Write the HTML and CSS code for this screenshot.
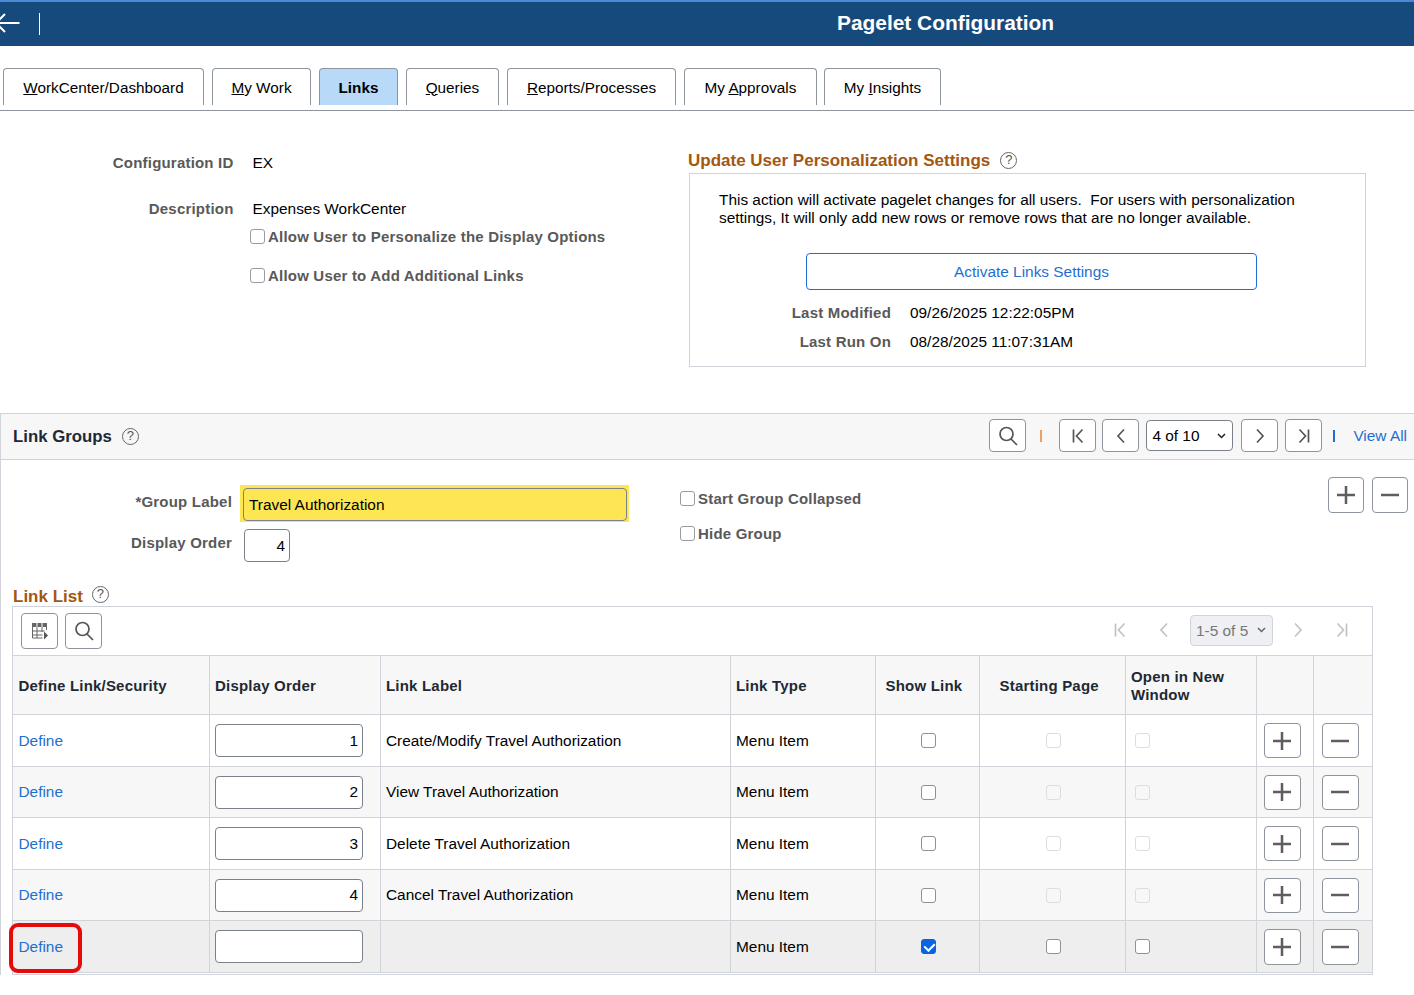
FILE: index.html
```html
<!DOCTYPE html>
<html lang="en">
<head>
<meta charset="utf-8">
<title>Pagelet Configuration</title>
<link rel="stylesheet" href="styles.css">
</head>
<body>
<svg class="defs" width="0" height="0" aria-hidden="true">
  <symbol id="i-search" viewBox="0 0 24 24"><circle cx="10.500" cy="10" r="6.500"/><path d="M15 15l6 6"/></symbol>
  <symbol id="i-first" viewBox="0 0 24 24"><path d="M7.500 5.500v13M16.500 5.500l-6 6.500 6 6.500"/></symbol>
  <symbol id="i-prev" viewBox="0 0 24 24"><path d="M15 5.500l-6 6.500 6 6.500"/></symbol>
  <symbol id="i-next" viewBox="0 0 24 24"><path d="M9 5.500l6 6.500-6 6.500"/></symbol>
  <symbol id="i-last" viewBox="0 0 24 24"><path d="M16.500 5.500v13M7.500 5.500l6 6.500-6 6.500"/></symbol>
  <symbol id="i-plus" viewBox="0 0 24 24"><path d="M12 3v18M3 12h18"/></symbol>
  <symbol id="i-minus" viewBox="0 0 24 24"><path d="M3 12h18"/></symbol>
</svg>

<header class="banner">
  <svg class="back" width="20" height="24" viewBox="0 0 20 24"><path d="M-5 11H19.500M5 2l-9 9 9 9"/></svg>
  <span class="banner-sep"></span>
  <h1 class="banner-title">Pagelet Configuration</h1>
</header>

<nav class="tabs">
  <a class="tab t1"><span><u>W</u>orkCenter/Dashboard</span></a>
  <a class="tab t2"><span><u>M</u>y Work</span></a>
  <a class="tab t3 active"><span>Links</span></a>
  <a class="tab t4"><span><u>Q</u>ueries</span></a>
  <a class="tab t5"><span><u>R</u>eports/Processes</span></a>
  <a class="tab t6"><span>My <u>A</u>pprovals</span></a>
  <a class="tab t7"><span>My <u>I</u>nsights</span></a>
</nav>

<section class="top">
  <div class="top-left">
    <div class="kv"><span class="lbl kv-l">Configuration ID</span><span class="val">EX</span></div>
    <div class="kv kv-desc"><span class="lbl kv-l">Description</span><span class="val">Expenses WorkCenter</span></div>
    <label class="opt opt-a"><input type="checkbox" class="cb"><span class="lbl">Allow User to Personalize the Display Options</span></label>
    <label class="opt opt-b"><input type="checkbox" class="cb"><span class="lbl">Allow User to Add Additional Links</span></label>
  </div>
  <div class="top-right">
    <h2 class="heading">Update User Personalization Settings <span class="help">?</span></h2>
    <div class="panel">
      <p class="panel-text">This action will activate pagelet changes for all users.&nbsp; For users with personalization settings, It will only add new rows or remove rows that are no longer available.</p>
      <button class="activate" type="button">Activate Links Settings</button>
      <div class="meta">
        <span class="lbl meta-l">Last Modified</span><span class="val">09/26/2025 12:22:05PM</span>
        <span class="lbl meta-l">Last Run On</span><span class="val">08/28/2025 11:07:31AM</span>
      </div>
    </div>
  </div>
</section>

<section class="groups">
  <div class="groups-head">
    <h2 class="groups-title">Link Groups <span class="help">?</span></h2>
    <div class="pager">
      <button class="ib tall" type="button"><svg class="ic"><use href="#i-search"/></svg></button>
      <span class="pipe orange"></span>
      <button class="ib tall" type="button"><svg class="ic"><use href="#i-first"/></svg></button>
      <button class="ib tall" type="button"><svg class="ic"><use href="#i-prev"/></svg></button>
      <select class="sel"><option>4 of 10</option></select>
      <button class="ib tall wide-gap" type="button"><svg class="ic"><use href="#i-next"/></svg></button>
      <button class="ib tall" type="button"><svg class="ic"><use href="#i-last"/></svg></button>
      <span class="pipe blue"></span>
      <a class="link viewall">View All</a>
    </div>
  </div>

  <div class="form">
    <div class="form-fields">
      <div class="f-row">
        <span class="lbl f-label">*Group Label</span>
        <span class="hl"><input class="inp inp-yellow" type="text" value="Travel Authorization"></span>
      </div>
      <div class="f-row f-row2">
        <span class="lbl f-label f-label2">Display Order</span>
        <input class="inp inp-short" type="text" value="4">
      </div>
    </div>
    <div class="form-checks">
      <label class="opt opt-c"><input type="checkbox" class="cb"><span class="lbl">Start Group Collapsed</span></label>
      <label class="opt opt-d"><input type="checkbox" class="cb"><span class="lbl">Hide Group</span></label>
    </div>
    <div class="form-actions">
      <button class="ib sq" type="button"><svg class="ic big"><use href="#i-plus"/></svg></button>
      <button class="ib sq" type="button"><svg class="ic big"><use href="#i-minus"/></svg></button>
    </div>
  </div>

  <h2 class="heading list-heading">Link List <span class="help">?</span></h2>
  <div class="list">
    <div class="list-bar">
      <button class="ib sq" type="button">
        <svg class="grid-ic" width="20" height="20" viewBox="0 0 20 20"><path class="g-top" d="M2 2h15v4H2z"/><path class="g-sep" d="M7 2v4M12 2v4"/><path class="g-lines" d="M2.500 6v11h10M16.500 6v3M2.500 10h12M2.500 14h10M7 6v11M12 6v5"/><path class="g-arrow" d="M14 10.500l4 4-4 4z"/></svg>
      </button>
      <button class="ib sq" type="button"><svg class="ic"><use href="#i-search"/></svg></button>
      <div class="list-pager">
        <svg class="ic off"><use href="#i-first"/></svg>
        <svg class="ic off"><use href="#i-prev"/></svg>
        <select class="sel sel-off" disabled><option>1-5 of 5</option></select>
        <svg class="ic off"><use href="#i-next"/></svg>
        <svg class="ic off"><use href="#i-last"/></svg>
      </div>
    </div>
    <table class="tbl">
      <colgroup><col class="c1"><col class="c2"><col class="c3"><col class="c4"><col class="c5"><col class="c6"><col class="c7"><col class="c8"><col class="c9"></colgroup>
      <thead>
        <tr><th>Define Link/Security</th><th>Display Order</th><th>Link Label</th><th>Link Type</th><th class="th-show">Show Link</th><th class="th-start">Starting Page</th><th>Open in New Window</th><th></th><th></th></tr>
      </thead>
      <tbody>
        <tr>
          <td><a class="link">Define</a></td>
          <td><input class="inp inp-row" type="text" value="1"></td>
          <td>Create/Modify Travel Authorization</td>
          <td>Menu Item</td>
          <td class="ck ck-show"><input type="checkbox" class="cb"></td>
          <td class="ck ck-start"><input type="checkbox" class="cb" disabled></td>
          <td class="ck-new"><input type="checkbox" class="cb" disabled></td>
          <td class="act"><button class="ib sq row-btn" type="button"><svg class="ic big"><use href="#i-plus"/></svg></button></td>
          <td class="act"><button class="ib sq row-btn" type="button"><svg class="ic big"><use href="#i-minus"/></svg></button></td>
        </tr>
        <tr>
          <td><a class="link">Define</a></td>
          <td><input class="inp inp-row" type="text" value="2"></td>
          <td>View Travel Authorization</td>
          <td>Menu Item</td>
          <td class="ck ck-show"><input type="checkbox" class="cb"></td>
          <td class="ck ck-start"><input type="checkbox" class="cb" disabled></td>
          <td class="ck-new"><input type="checkbox" class="cb" disabled></td>
          <td class="act"><button class="ib sq row-btn" type="button"><svg class="ic big"><use href="#i-plus"/></svg></button></td>
          <td class="act"><button class="ib sq row-btn" type="button"><svg class="ic big"><use href="#i-minus"/></svg></button></td>
        </tr>
        <tr>
          <td><a class="link">Define</a></td>
          <td><input class="inp inp-row" type="text" value="3"></td>
          <td>Delete Travel Authorization</td>
          <td>Menu Item</td>
          <td class="ck ck-show"><input type="checkbox" class="cb"></td>
          <td class="ck ck-start"><input type="checkbox" class="cb" disabled></td>
          <td class="ck-new"><input type="checkbox" class="cb" disabled></td>
          <td class="act"><button class="ib sq row-btn" type="button"><svg class="ic big"><use href="#i-plus"/></svg></button></td>
          <td class="act"><button class="ib sq row-btn" type="button"><svg class="ic big"><use href="#i-minus"/></svg></button></td>
        </tr>
        <tr>
          <td><a class="link">Define</a></td>
          <td><input class="inp inp-row" type="text" value="4"></td>
          <td>Cancel Travel Authorization</td>
          <td>Menu Item</td>
          <td class="ck ck-show"><input type="checkbox" class="cb"></td>
          <td class="ck ck-start"><input type="checkbox" class="cb" disabled></td>
          <td class="ck-new"><input type="checkbox" class="cb" disabled></td>
          <td class="act"><button class="ib sq row-btn" type="button"><svg class="ic big"><use href="#i-plus"/></svg></button></td>
          <td class="act"><button class="ib sq row-btn" type="button"><svg class="ic big"><use href="#i-minus"/></svg></button></td>
        </tr>
        <tr class="new-row">
          <td class="callout-cell"><a class="link">Define</a><span class="callout"></span></td>
          <td><input class="inp inp-row" type="text" value=""></td>
          <td></td>
          <td>Menu Item</td>
          <td class="ck ck-show"><input type="checkbox" class="cb" checked></td>
          <td class="ck ck-start"><input type="checkbox" class="cb"></td>
          <td class="ck-new"><input type="checkbox" class="cb"></td>
          <td class="act"><button class="ib sq row-btn last-btn" type="button"><svg class="ic big"><use href="#i-plus"/></svg></button></td>
          <td class="act"><button class="ib sq row-btn last-btn" type="button"><svg class="ic big"><use href="#i-minus"/></svg></button></td>
        </tr>
      </tbody>
    </table>
  </div>
</section>
</body>
</html>
```

FILE: styles.css
```css
* { box-sizing: border-box; }
html, body { margin: 0; padding: 0; }
body {
  font-family: "Liberation Sans", Arial, sans-serif;
  font-size: 15.400px;
  line-height: 18px;
  color: #000;
  background: #fff;
  height: 995px;
  overflow: hidden;
}
.defs { position: absolute; }

/* banner */
.banner {
  height: 46px;
  background: #174a7c;
  border-top: 2px solid #4a8ad4;
  display: flex;
  align-items: center;
}
.back { fill: none; stroke: #fff; stroke-width: 2; flex: none; }
.banner-sep { width: 1px; height: 22px; background: #fff; margin-left: 19px; }
.banner-title {
  margin: 0 0 2px;
  flex: 1;
  padding-left: 797px;
  font-size: 20.900px;
  line-height: 24px;
  font-weight: 700;
  color: #fff;
}

/* tabs */
.tabs {
  display: flex;
  margin-top: 22px;
  padding: 0 0 5px 3px;
  border-bottom: 1px solid #8d949b;
}
.tab {
  height: 37px;
  border: 1px solid #8d949b;
  border-bottom: 0;
  border-radius: 4px 4px 0 0;
  display: flex;
  align-items: center;
  justify-content: center;
  color: #000;
  margin-right: 8px;
  font-size: 15.300px;
  padding-top: 1px;
}
.t1 { width: 201px; }
.t2 { width: 99px; }
.t3 { width: 79px; }
.t4 { width: 93px; }
.t5 { width: 169px; }
.t6 { width: 133px; margin-right: 7px; }
.t7 { width: 117px; }
.active { background: #b8daf8; font-weight: 700; }

/* top area */
.lbl { font-size: 15px; font-weight: 700; color: #595959; letter-spacing: .2px; }
.val { color: #000; }
.top { display: flex; padding-top: 40px; }
.top-left { width: 688px; padding-top: 3px; }
.kv { display: flex; gap: 19px; }
.kv-l { width: 233.500px; text-align: right; }
.kv-desc { margin-top: 28px; }
.opt { display: flex; align-items: center; }
.opt .cb { margin-bottom: 2px; }
.opt-a { margin: 10px 0 0 250px; gap: 3px; }
.opt-b { margin: 21px 0 0 250px; gap: 3px; }

.heading {
  margin: 0;
  height: 18px;
  padding-top: 2px;
  font-size: 17px;
  line-height: 18px;
  font-weight: 700;
  color: #a4570f;
  display: flex;
  align-items: center;
  gap: 10px;
}
.heading .help { margin-top: -2px; }
.help {
  width: 17px;
  height: 17px;
  border: 1.500px solid #666;
  border-radius: 50%;
  font-size: 13px;
  line-height: 14px;
  font-weight: 400;
  color: #555;
  text-align: center;
  flex: none;
}
.panel {
  width: 677px;
  height: 194px;
  margin: 4px 0 0 1px;
  border: 1px solid #d0d4da;
  padding: 17px 0 0 29px;
}
.panel-text { margin: 0; width: 610px; }
.activate {
  display: block;
  width: 451px;
  height: 37px;
  margin: 26px 0 0 87px;
  background: #fff;
  border: 1px solid #1f6fd0;
  border-radius: 4px;
  color: #1f6fd0;
  font: 15.400px/18px "Liberation Sans", Arial, sans-serif;
}
.meta {
  display: grid;
  grid-template-columns: 172px auto;
  column-gap: 19px;
  row-gap: 11px;
  margin-top: 14px;
  justify-content: start;
}
.meta-l { text-align: right; }

/* link groups */
.groups { margin-top: 46px; border-left: 1px solid #d0d4da; }
.groups-head {
  height: 47px;
  background: #f7f7f7;
  border-top: 1px solid #d0d4da;
  border-bottom: 1px solid #d0d4da;
  display: flex;
  align-items: center;
  padding: 0 7px 0 12px;
}
.groups-title {
  margin: 0;
  font-size: 16.800px;
  line-height: 20px;
  font-weight: 700;
  color: #1f2933;
  display: flex;
  align-items: center;
  gap: 10px;
}
.pager { margin-left: auto; margin-bottom: 2px; display: flex; align-items: center; }
.ib {
  width: 37px;
  height: 36px;
  padding: 0;
  background: #fff;
  border: 1px solid #8d949b;
  border-radius: 4px;
  display: flex;
  align-items: center;
  justify-content: center;
  flex: none;
}
.tall { height: 33px; margin-right: 6px; }
.wide-gap { margin-right: 7px; }
.ic { width: 24px; height: 24px; fill: none; stroke: #555; stroke-width: 1.700; flex: none; }
.ic.big { stroke: #5e5e5e; stroke-width: 2.500; }
.ic.off { stroke: #bfc3c8; }
.pipe { width: 2px; height: 12px; margin: 0 17px 0 0; }
.orange { background: #e8a35e; margin-left: 8px; }
.blue { background: #1f6fd0; margin-left: 5px; }
.sel {
  -webkit-appearance: none;
  appearance: none;
  height: 31px;
  width: 87px;
  margin: 0 8px 0 1px;
  font: 15.400px "Liberation Sans", Arial, sans-serif;
  color: #000;
  background: #fff url("data:image/svg+xml,%3Csvg xmlns='http://www.w3.org/2000/svg' width='9' height='6'%3E%3Cpath d='M1 1l3.500 3.500L8 1' fill='none' stroke='%23222' stroke-width='1.500'/%3E%3C/svg%3E") no-repeat right 6px center;
  border: 1px solid #7b8188;
  border-radius: 4px;
  padding-left: 5px;
}
.sel-off {
  width: 83px;
  margin: 0 -7px 0 -6px;
  color: #777;
  background: #eef0f3 url("data:image/svg+xml,%3Csvg xmlns='http://www.w3.org/2000/svg' width='9' height='6'%3E%3Cpath d='M1 1l3.500 3.500L8 1' fill='none' stroke='%23666' stroke-width='1.500'/%3E%3C/svg%3E") no-repeat right 6px center;
  border-color: #d0d4da;
  opacity: 1;
}
.link { color: #1f6fd0; }
.viewall { margin-left: 1px; }

/* form */
.form { display: flex; height: 126px; }
.form-fields { width: 679px; padding-top: 25px; }
.f-row { display: flex; align-items: flex-start; }
.f-row2 { margin-top: 7px; }
.f-label { width: 231px; text-align: right; padding-top: 8px; }
.f-label2 { padding-top: 5px; }
.hl {
  display: block;
  margin-left: 8px;
  background: #fde554;
  padding: 3px 2px 1px 3px;
}
.inp {
  height: 33px;
  border: 1px solid #7b8188;
  border-radius: 4px;
  background: #fff;
  font: 15.400px "Liberation Sans", Arial, sans-serif;
  color: #000;
  padding: 0 4px 0 5px;
}
.inp-yellow { width: 384px; background: #fde554; display: block; }
.inp-short { width: 46px; text-align: right; margin-left: 12px; }
.form-checks { width: 648px; padding-top: 30px; }
.opt-c { gap: 3px; }
.opt-d { margin-top: 17px; gap: 3px; }
.form-actions { display: flex; gap: 8px; padding-top: 17px; }
.form-actions .ib { width: 36px; }
.list-heading { margin: 1px 0 0 12px; gap: 9px; }
.heading.list-heading .help { margin-top: -6px; }

/* list */
.list {
  width: 1361px;
  margin: 1px 0 0 11px;
  border: 1px solid #d0d4da;
}
.list-bar { height: 48px; display: flex; align-items: center; padding-left: 8px; gap: 7px; }
.list-pager { margin-left: auto; margin-bottom: 2px; display: flex; align-items: center; gap: 20px; padding-right: 18px; }
.grid-ic { display: block; }
.g-top { fill: #666; }
.g-sep { fill: none; stroke: #fff; stroke-width: 1; }
.g-lines { fill: none; stroke: #666; stroke-width: 1; }
.g-arrow { fill: #555; }

.tbl { width: 1359px; margin-bottom: 1px; border-collapse: collapse; table-layout: fixed; }
.c1 { width: 196px; }
.c2 { width: 171px; }
.c3 { width: 350px; }
.c4 { width: 145px; }
.c5 { width: 104px; }
.c6 { width: 146px; }
.c7 { width: 131px; }
.c8 { width: 57px; }
.c9 { width: 59px; }
.tbl th, .tbl td {
  border: 1px solid #d0d4da;
  padding: 0 5.500px;
  text-align: left;
  vertical-align: middle;
}
.tbl tr > :first-child { border-left: 0; }
.tbl tr > :last-child { border-right: 0; }
.tbl th {
  height: 59px;
  padding-top: 1px;
  background: #f7f7f7;
  font-size: 15px;
  font-weight: 700;
  color: #1f2933;
  letter-spacing: .2px;
}
.tbl tbody tr { background: #fff; }
.tbl tbody tr:nth-child(even) { background: #f7f7f7; }
.tbl tbody tr.new-row { background: #eee; }
.tbl tbody td { height: 52px; }
.tbl tbody tr:nth-child(even) td { height: 51px; }
.th-show { padding-left: 10px !important; }
.th-start { padding-left: 20px !important; }
.tbl .cb { display: block; }
.ck .cb { margin: 0 auto; }
.ck-show { padding-left: 9px !important; }
.ck-start { padding-left: 8.500px !important; }
.ck-new { padding-left: 9px !important; }
.inp-row { width: 148px; text-align: right; display: block; }
.act { padding: 0 !important; }
.row-btn { margin: 0 0 0 7px; height: 35px; }
.act + .act .row-btn { margin-left: 8px; }
.last-btn { height: 36px; }

.cb {
  -webkit-appearance: none;
  appearance: none;
  width: 15px;
  height: 15px;
  margin: 0;
  background: #fff;
  border: 1.500px solid #8f8f9d;
  border-radius: 3px;
  position: relative;
  flex: none;
  display: inline-block;
}
.opt .cb { border-color: #9a9aa4; }
.cb:disabled { border-color: #dcdde1; background: transparent; }
.cb:checked { background: #0b63e0; border-color: #0b63e0; }
.cb:checked::after {
  content: "";
  position: absolute;
  left: 3.500px;
  top: 0.500px;
  width: 5px;
  height: 8px;
  border: solid #fff;
  border-width: 0 2px 2px 0;
  transform: rotate(45deg);
}

.callout-cell { position: relative; }
.callout {
  position: absolute;
  left: -4px;
  top: 2px;
  width: 73px;
  height: 50px;
  border: 4px solid #e60a0a;
  border-radius: 9px;
}
```
